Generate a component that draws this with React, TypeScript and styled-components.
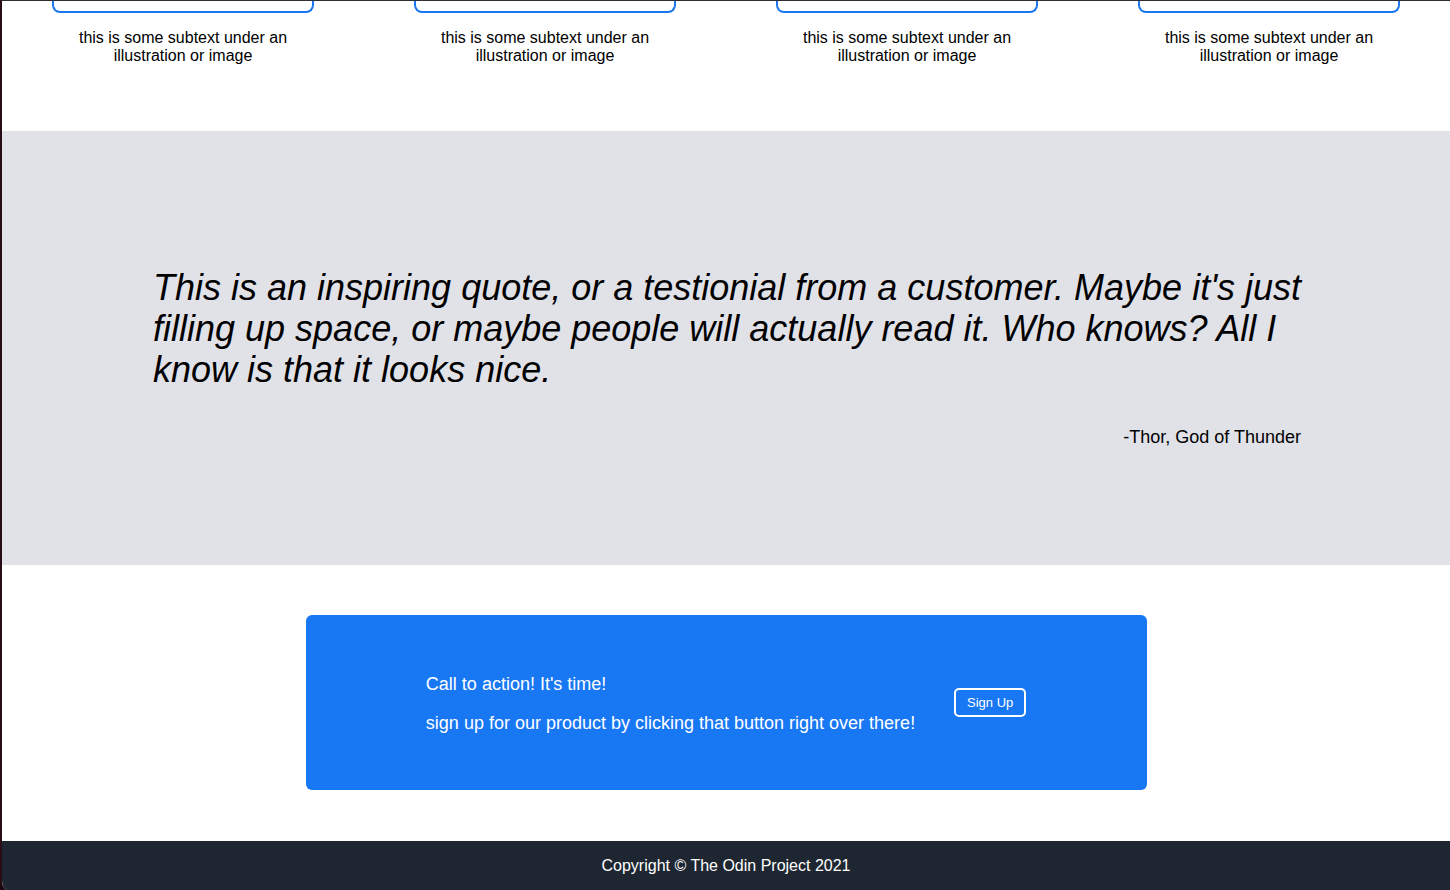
import React from "react";
import styled, { createGlobalStyle } from "styled-components";

const GlobalStyle = createGlobalStyle`
  html, body {
    margin: 0;
    padding: 0;
    background: #1a0a10;
  }
  body {
    font-family: "Liberation Sans", Helvetica, Arial, sans-serif;
    color: #000;
  }
`;

const Frame = styled.div`
  min-height: 100vh;
  box-sizing: border-box;
  background: #fff;
  border-top: 1px solid #2e2e2e;
  border-left: 2px solid #2a0c16;
  border-bottom-left-radius: 10px;
  overflow: hidden;
  display: flex;
  flex-direction: column;
`;

const Features = styled.section`
  display: grid;
  grid-template-columns: repeat(4, 1fr);
  justify-items: center;
  padding-bottom: 66px;
`;

const Feature = styled.div`
  width: 262px;
  display: flex;
  flex-direction: column;
  align-items: center;
`;

const CardEdge = styled.div`
  width: 100%;
  height: 12px;
  box-sizing: border-box;
  border: 2px solid #1a77f2;
  border-top: none;
  border-radius: 0 0 8px 8px;
`;

const Subtext = styled.p`
  margin: 16px 0 0;
  font-size: 16px;
  line-height: 18px;
  text-align: center;
`;

const QuoteSection = styled.section`
  background: #e1e2e7;
  padding: 136px 0 117px;
  display: flex;
  flex-direction: column;
  align-items: center;
`;

const Quote = styled.blockquote`
  width: 1150px;
  margin: 0 0 0 4px;
  font-size: 36px;
  line-height: 41px;
  font-style: italic;
`;

const Cite = styled.p`
  width: 1150px;
  margin: 37px 0 0;
  font-size: 18px;
  line-height: 21px;
  text-align: right;
`;

const CtaSection = styled.section`
  padding: 50px 0 51px;
  display: flex;
  justify-content: center;
`;

const CtaBox = styled.div`
  width: 841px;
  height: 175px;
  background: #1877f2;
  border-radius: 6px;
  display: flex;
  align-items: center;
  justify-content: center;
  gap: 39px;
  color: #fff;
`;

const CtaText = styled.div`
  display: flex;
  flex-direction: column;
  gap: 18px;
  padding-top: 3px;
  font-size: 18px;
  line-height: 21px;
  p {
    margin: 0;
  }
`;

const SignUp = styled.button`
  width: 72px;
  height: 29px;
  box-sizing: border-box;
  border: 2px solid #fff;
  border-radius: 5px;
  background: transparent;
  color: #fff;
  font-family: inherit;
  font-size: 13px;
  padding: 0;
  cursor: pointer;
`;

const Footer = styled.footer`
  background: #1d2631;
  color: #fff;
  height: 49px;
  padding-top: 1px;
  line-height: 48px;
  text-align: center;
  font-size: 16px;
`;

const features = [1, 2, 3, 4];

export default function App() {
  return (
    <>
      <GlobalStyle />
      <Frame>
        <Features>
          {features.map((f) => (
            <Feature key={f}>
              <CardEdge />
              <Subtext>this is some subtext under an illustration or image</Subtext>
            </Feature>
          ))}
        </Features>
        <QuoteSection>
          <Quote>
            This is an inspiring quote, or a testionial from a customer. Maybe it's just
            filling up space, or maybe people will actually read it. Who knows? All I know
            is that it looks nice.
          </Quote>
          <Cite>-Thor, God of Thunder</Cite>
        </QuoteSection>
        <CtaSection>
          <CtaBox>
            <CtaText>
              <p>Call to action! It's time!</p>
              <p>sign up for our product by clicking that button right over there!</p>
            </CtaText>
            <SignUp>Sign Up</SignUp>
          </CtaBox>
        </CtaSection>
        <Footer>Copyright © The Odin Project 2021</Footer>
      </Frame>
    </>
  );
}
